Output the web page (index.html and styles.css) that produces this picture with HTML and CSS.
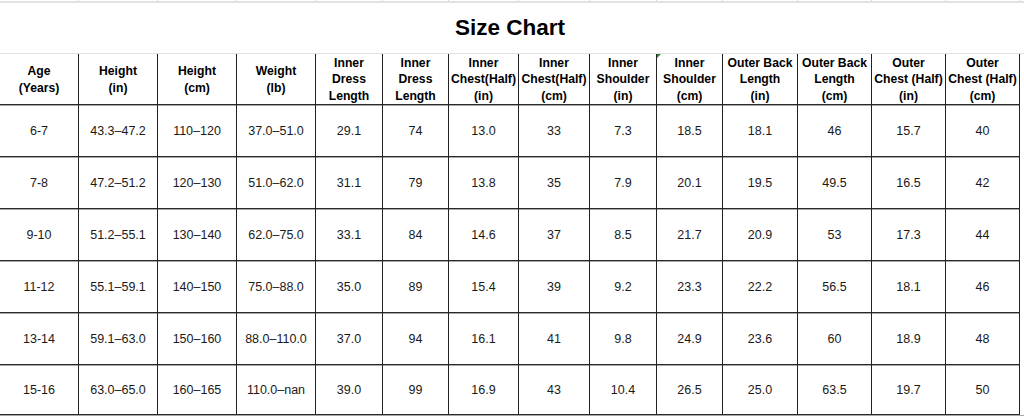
FILE: index.html
```html
<!DOCTYPE html>
<html lang="en">
<head>
<meta charset="utf-8">
<title>Size Chart</title>
<link rel="stylesheet" href="styles.css">
</head>
<body>
<div class="strip">
  <span></span><span></span><span></span><span></span><span></span><span></span><span></span><span></span><span></span><span></span><span></span><span></span><span></span><span></span>
</div>
<h1 class="title">Size Chart</h1>
<div class="sheet">
  <div class="c h">Age<br>(Years)</div>
  <div class="c h">Height<br>(in)</div>
  <div class="c h">Height<br>(cm)</div>
  <div class="c h">Weight<br>(lb)</div>
  <div class="c h">Inner<br>Dress<br>Length</div>
  <div class="c h">Inner<br>Dress<br>Length</div>
  <div class="c h">Inner<br>Chest(Half)<br>(in)</div>
  <div class="c h">Inner<br>Chest(Half)<br>(cm)</div>
  <div class="c h">Inner<br>Shoulder<br>(in)</div>
  <div class="c h flag">Inner<br>Shoulder<br>(cm)</div>
  <div class="c h">Outer Back<br>Length<br>(in)</div>
  <div class="c h">Outer Back<br>Length<br>(cm)</div>
  <div class="c h">Outer<br>Chest (Half)<br>(in)</div>
  <div class="c h">Outer<br>Chest (Half)<br>(cm)</div>

  <div class="c">6-7</div><div class="c">43.3–47.2</div><div class="c">110–120</div><div class="c">37.0–51.0</div><div class="c">29.1</div><div class="c">74</div><div class="c">13.0</div><div class="c">33</div><div class="c">7.3</div><div class="c">18.5</div><div class="c">18.1</div><div class="c">46</div><div class="c">15.7</div><div class="c">40</div>

  <div class="c">7-8</div><div class="c">47.2–51.2</div><div class="c">120–130</div><div class="c">51.0–62.0</div><div class="c">31.1</div><div class="c">79</div><div class="c">13.8</div><div class="c">35</div><div class="c">7.9</div><div class="c">20.1</div><div class="c">19.5</div><div class="c">49.5</div><div class="c">16.5</div><div class="c">42</div>

  <div class="c">9-10</div><div class="c">51.2–55.1</div><div class="c">130–140</div><div class="c">62.0–75.0</div><div class="c">33.1</div><div class="c">84</div><div class="c">14.6</div><div class="c">37</div><div class="c">8.5</div><div class="c">21.7</div><div class="c">20.9</div><div class="c">53</div><div class="c">17.3</div><div class="c">44</div>

  <div class="c">11-12</div><div class="c">55.1–59.1</div><div class="c">140–150</div><div class="c">75.0–88.0</div><div class="c">35.0</div><div class="c">89</div><div class="c">15.4</div><div class="c">39</div><div class="c">9.2</div><div class="c">23.3</div><div class="c">22.2</div><div class="c">56.5</div><div class="c">18.1</div><div class="c">46</div>

  <div class="c">13-14</div><div class="c">59.1–63.0</div><div class="c">150–160</div><div class="c">88.0–110.0</div><div class="c">37.0</div><div class="c">94</div><div class="c">16.1</div><div class="c">41</div><div class="c">9.8</div><div class="c">24.9</div><div class="c">23.6</div><div class="c">60</div><div class="c">18.9</div><div class="c">48</div>

  <div class="c">15-16</div><div class="c">63.0–65.0</div><div class="c">160–165</div><div class="c">110.0–nan</div><div class="c">39.0</div><div class="c">99</div><div class="c">16.9</div><div class="c">43</div><div class="c">10.4</div><div class="c">26.5</div><div class="c">25.0</div><div class="c">63.5</div><div class="c">19.7</div><div class="c">50</div>
</div>
</body>
</html>
```
FILE: styles.css
```css
html, body {
  margin: 0;
  padding: 0;
  background: #ffffff;
}

body {
  font-family: "Liberation Sans", Arial, sans-serif;
  color: #111111;
  overflow: hidden;
}

.strip,
.sheet {
  display: grid;
  grid-template-columns: 79px 79px 79px 79px 67px 66px 70px 71px 67px 66px 75px 74px 74px 74px;
}

.strip {
  height: 3px;
  box-sizing: border-box;
  border-bottom: 2px solid #e2e2e2;
}

.strip span {
  border-right: 1px solid #d6d6d6;
}

.title {
  margin: 0;
  height: 50px;
  display: flex;
  align-items: center;
  justify-content: center;
  font-size: 22.5px;
  font-weight: bold;
  color: #000000;
  padding-right: 4px;
  box-sizing: border-box;
}

.sheet {
  border-top: 1px solid #e3e3e3;
  border-bottom: 1px solid #a8a8a8;
}

.c {
  position: relative;
  box-sizing: border-box;
  height: 52px;
  border-right: 1px solid #222222;
  border-bottom: 1px solid #2a2a2a;
  box-shadow: inset 0 1px 0 #a8a8a8;
  display: flex;
  align-items: center;
  justify-content: center;
  text-align: center;
  white-space: nowrap;
  font-size: 12.5px;
  color: #1a1a1a;
}

.c:nth-last-child(-n+14) {
  height: 50px;
}

.c.h {
  height: 51px;
  box-shadow: none;
  font-size: 12.2px;
  font-weight: bold;
  line-height: 16.5px;
  color: #000000;
  padding-top: 1px;
}

.flag::before {
  content: "";
  position: absolute;
  left: 0;
  top: 0;
  border-top: 4px solid #1e8e1e;
  border-right: 4px solid transparent;
}
```
